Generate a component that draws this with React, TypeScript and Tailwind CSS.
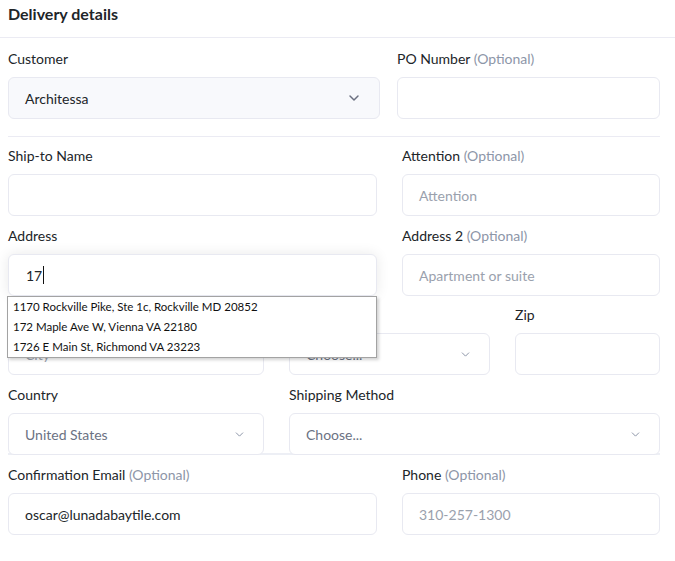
import { ChevronDown } from "lucide-react";

const font = "font-['Segoe_UI','Lato','Liberation_Sans',sans-serif]";

function Label({ text, optional }: { text: string; optional?: boolean }) {
  return (
    <div className="h-5 text-[14px] leading-5 text-[#212529]">
      {text}
      {optional && <span className="text-[#8d96a8]"> (Optional)</span>}
    </div>
  );
}

function Input({ value, placeholder }: { value?: string; placeholder?: string }) {
  return (
    <div className="mt-2 flex h-[42px] items-center rounded-md border border-[#e8e9f1] bg-white px-[16px] text-[14px]">
      {value ? <span className="text-[#212529]">{value}</span> : <span className="text-[#9aa1ad]">{placeholder}</span>}
    </div>
  );
}

function Select({ value, dark, bg }: { value: string; dark?: boolean; bg?: boolean }) {
  return (
    <div
      className={`mt-2 flex h-[42px] items-center justify-between rounded-md border border-[#e8e9f1] pl-[16px] pr-[17px] text-[14px] ${bg ? "bg-[#f8f9fc]" : "bg-white"}`}
    >
      <span className={dark ? "text-[#212529]" : "text-[#6b7283]"}>{value}</span>
      <ChevronDown size={dark ? 16 : 13} strokeWidth={dark ? 2.2 : 1.8} className={dark ? "text-[#6b7080]" : "text-[#8a93a6]"} />
    </div>
  );
}

export default function App() {
  return (
    <div className={`${font} h-[561px] w-[675px] bg-white`}>
      <div className="h-[38px] border-b border-[#ebebf3] pl-2 pt-[4px]">
        <h2 className="text-[16px] font-bold leading-5 text-[#212529]">Delivery details</h2>
      </div>

      <div className="w-[660px] pl-2">
        <div className="grid grid-cols-[372px_263px] gap-x-[17px] pt-[11px] pb-[17px]">
          <div>
            <Label text="Customer" />
            <Select value="Architessa" dark bg />
          </div>
          <div>
            <Label text="PO Number" optional />
            <Input />
          </div>
        </div>

        <div className="border-t border-[#ebebf3]" />

        <div className="grid grid-cols-[369px_258px] gap-x-[25px] pt-[9px]">
          <div>
            <Label text="Ship-to Name" />
            <Input />
          </div>
          <div>
            <Label text="Attention" optional />
            <Input placeholder="Attention" />
          </div>
        </div>

        <div className="grid grid-cols-[369px_258px] gap-x-[25px] pt-[10px]">
          <div className="relative z-10">
            <Label text="Address" />
            <div className="mt-2 flex h-[42px] items-center rounded-md border border-[#e8e9f1] bg-white px-[17px] text-[14px] text-[#212529] shadow-[0_0_14px_rgba(0,0,0,0.09)]">
              17<span className="ml-[1px] h-[18px] w-px bg-[#111]" />
            </div>
            <ul className="absolute left-[-1px] top-[70px] w-[370px] border border-[#a3a3a3] bg-white text-[11.5px] leading-5 text-[#111] shadow-[2px_2px_3px_rgba(0,0,0,0.18)]">
              <li className="pl-[5px]">1170 Rockville Pike, Ste 1c, Rockville MD 20852</li>
              <li className="pl-[5px]">172 Maple Ave W, Vienna VA 22180</li>
              <li className="pl-[5px]">1726 E Main St, Richmond VA 23223</li>
            </ul>
          </div>
          <div>
            <Label text="Address 2" optional />
            <Input placeholder="Apartment or suite" />
          </div>
        </div>

        <div className="grid grid-cols-[256px_201px_145px] gap-x-[25px] pt-[9px]">
          <div>
            <Label text="City" />
            <Input placeholder="City" />
          </div>
          <div>
            <Label text="State" />
            <Select value="Choose..." />
          </div>
          <div>
            <Label text="Zip" />
            <Input />
          </div>
        </div>

        <div className="grid grid-cols-[256px_371px] gap-x-[25px] pt-[10px]">
          <div>
            <Label text="Country" />
            <Select value="United States" />
          </div>
          <div>
            <Label text="Shipping Method" />
            <Select value="Choose..." />
          </div>
        </div>

        <div className="-mt-[2px] border-t-2 border-[#edeff5]" />

        <div className="grid grid-cols-[369px_258px] gap-x-[25px] pt-[10px]">
          <div>
            <Label text="Confirmation Email" optional />
            <Input value="oscar@lunadabaytile.com" />
          </div>
          <div>
            <Label text="Phone" optional />
            <Input placeholder="310-257-1300" />
          </div>
        </div>
      </div>
    </div>
  );
}
